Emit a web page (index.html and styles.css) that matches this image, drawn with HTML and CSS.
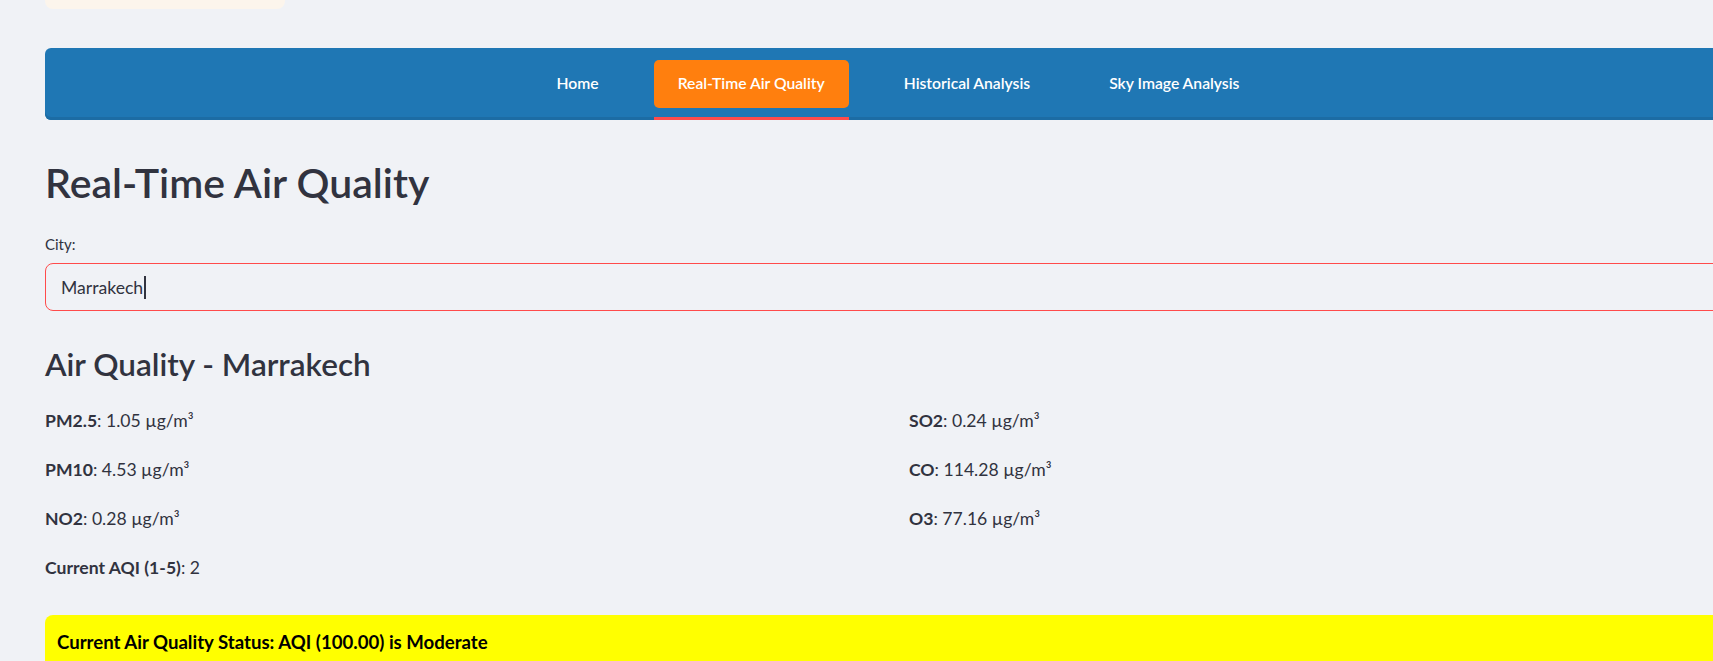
FILE: index.html
```html
<!DOCTYPE html>
<html lang="en">
<head>
<meta charset="utf-8">
<title>Real-Time Air Quality</title>
<link rel="stylesheet" href="styles.css">
</head>
<body>
<div class="page">
  <div class="top-card"></div>
  <nav class="navbar">
    <div class="nav-item"><a class="nav-link">Home</a></div>
    <div class="nav-item active"><a class="nav-link">Real-Time Air Quality</a></div>
    <div class="nav-item"><a class="nav-link">Historical Analysis</a></div>
    <div class="nav-item"><a class="nav-link">Sky Image Analysis</a></div>
  </nav>
  <h1 class="title">Real-Time Air Quality</h1>
  <label class="field-label">City:</label>
  <div class="text-input"><span class="input-value">Marrakech</span><span class="caret"></span></div>
  <h2 class="subtitle">Air Quality - Marrakech</h2>
  <div class="metrics">
    <div class="metric-col">
      <p class="metric"><strong>PM2.5</strong>: 1.05 µg/m³</p>
      <p class="metric"><strong>PM10</strong>: 4.53 µg/m³</p>
      <p class="metric"><strong>NO2</strong>: 0.28 µg/m³</p>
      <p class="metric"><strong>Current AQI (1-5)</strong>: 2</p>
    </div>
    <div class="metric-col">
      <p class="metric"><strong>SO2</strong>: 0.24 µg/m³</p>
      <p class="metric"><strong>CO</strong>: 114.28 µg/m³</p>
      <p class="metric"><strong>O3</strong>: 77.16 µg/m³</p>
    </div>
  </div>
  <div class="status-banner"><strong>Current Air Quality Status: AQI (100.00) is Moderate</strong></div>
</div>
</body>
</html>
```
FILE: styles.css
```css
html, body {
  margin: 0;
  padding: 0;
  background: #f0f2f6;
  overflow: hidden;
}
body {
  font-family: "Lato", "Noto Sans", sans-serif;
  color: #31333f;
}
.page {
  width: 1712px;
  margin-left: 45px;
  display: flex;
  flex-direction: column;
}
.top-card {
  width: 240px;
  height: 9px;
  background: #fcf5ec;
  border-radius: 0 0 8px 8px;
}
.navbar {
  margin-top: 39px;
  height: 72px;
  box-sizing: border-box;
  padding-top: 12px;
  background: #1f77b4;
  border-radius: 6px;
  box-shadow: inset 0 -3px 0 #1c6ca4;
  display: flex;
  justify-content: center;
  gap: 31px;
  padding-right: 6px;
}
.nav-item {
  display: flex;
  flex-direction: column;
  box-sizing: border-box;
}
.nav-item.active {
  border-bottom: 3px solid #ff4b4b;
}
.nav-link {
  height: 48px;
  padding: 0 24px 2px;
  box-sizing: border-box;
  display: flex;
  align-items: center;
  border-radius: 5px;
  color: #ffffff;
  font-size: 15.7px;
  font-weight: 600;
  white-space: nowrap;
}
.nav-item.active .nav-link {
  background: #ff7f0e;
}
.title {
  margin: 37px 0 0;
  font-size: 41px;
  line-height: 52px;
  font-weight: 600;
  color: #31333f;
}
.field-label {
  display: block;
  margin-top: 25px;
  font-size: 15px;
  line-height: 20px;
}
.text-input {
  margin-top: 9px;
  height: 48px;
  box-sizing: border-box;
  border: 1px solid #ff4b4b;
  border-radius: 8px;
  padding-left: 15px;
  display: flex;
  align-items: center;
  font-size: 17.6px;
  color: #31333f;
}
.caret {
  display: inline-block;
  width: 2px;
  height: 23px;
  background: #31333f;
  margin-left: 1px;
}
.subtitle {
  margin: 31px 0 0;
  font-size: 31.5px;
  line-height: 44px;
  font-weight: 600;
}
.metrics {
  margin-top: 22px;
  display: grid;
  grid-template-columns: 1fr 1fr;
  column-gap: 16px;
}
.metric-col {
  display: flex;
  flex-direction: column;
  gap: 24px;
}
.metric {
  margin: 0;
  font-size: 17.6px;
  line-height: 25px;
}
.metric strong {
  font-weight: 700;
}
.status-banner {
  margin-top: 35px;
  background: #ffff00;
  border-radius: 8px;
  padding: 15px 12px 16px;
  font-size: 18.6px;
  line-height: 24px;
  color: #000000;
}
```
